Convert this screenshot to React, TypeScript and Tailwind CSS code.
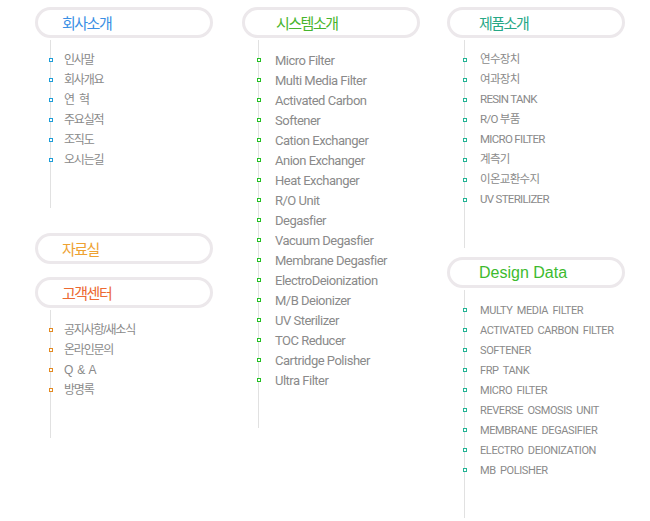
import React from 'react';

type Section = {
  title: string;
  titleClass: string;
  titlePad: string;
  bulletClass: string;
  lineOffset: string;
  textGap: string;
  itemClass: string;
  items: string[];
};

const KR = "font-['Noto_Sans_CJK_KR',sans-serif]";

function Pill({ title, titleClass, titlePad }: { title: string; titleClass: string; titlePad: string }) {
  return (
    <div
      className={`w-[178px] h-[31px] rounded-full border-[3px] border-[#ece8eb] bg-white flex items-center ${titlePad}`}
    >
      <span className={`leading-none ${titleClass}`}>{title}</span>
    </div>
  );
}

function MenuList({ section }: { section: Section }) {
  return (
    <ul className={`mt-[2px] border-l border-[#e1e1e1] pt-[10px] pb-[38px] ${section.lineOffset}`}>
      {section.items.map((item) => (
        <li key={item} className="h-5 flex items-center">
          <span className={`w-[4px] h-[4px] border bg-white -ml-[2px] shrink-0 ${section.bulletClass}`} />
          <span className={`${section.textGap} text-[#8a8a8a] leading-none whitespace-pre ${section.itemClass}`}>
            {item}
          </span>
        </li>
      ))}
    </ul>
  );
}

const company: Section = {
  title: '회사소개',
  titleClass: `${KR} text-[15px] tracking-[-1.5px] text-[#3a8fe4]`,
  titlePad: 'pl-[24px]',
  bulletClass: 'border-[#1f9ed8]',
  lineOffset: 'ml-[15px]',
  textGap: 'ml-[11px]',
  itemClass: `font-['Liberation_Sans','Noto_Sans_CJK_KR',sans-serif] text-[12px] tracking-[-1.2px] [word-spacing:3px]`,
  items: ['인사말', '회사개요', '연 혁', '주요실적', '조직도', '오시는길'],
};

const customer: Section = {
  ...company,
  title: '고객센터',
  titleClass: `${KR} text-[15px] tracking-[-1.5px] text-[#ec6a32]`,
  bulletClass: 'border-[#e38a22]',
  items: ['공지사항/새소식', '온라인문의', 'Q & A', '방명록'],
};

const system: Section = {
  title: '시스템소개',
  titleClass: `${KR} text-[15px] tracking-[-1.5px] text-[#47b52e]`,
  titlePad: 'pl-[31px]',
  bulletClass: 'border-[#25c025]',
  lineOffset: 'ml-[16px]',
  textGap: 'ml-[14px]',
  itemClass: "font-['Roboto',sans-serif] text-[13px] tracking-[-0.5px]",
  items: [
    'Micro Filter',
    'Multi Media Filter',
    'Activated Carbon',
    'Softener',
    'Cation Exchanger',
    'Anion Exchanger',
    'Heat Exchanger',
    'R/O Unit',
    'Degasfier',
    'Vacuum Degasfier',
    'Membrane Degasfier',
    'ElectroDeionization',
    'M/B Deionizer',
    'UV Sterilizer',
    'TOC Reducer',
    'Cartridge Polisher',
    'Ultra Filter',
  ],
};

const product: Section = {
  title: '제품소개',
  titleClass: `${KR} text-[15px] tracking-[-1.5px] text-[#27a886]`,
  titlePad: 'pl-[29px]',
  bulletClass: 'border-[#22b394]',
  lineOffset: 'ml-[17px]',
  textGap: 'ml-[13px]',
  itemClass: `font-['Roboto','Noto_Sans_CJK_KR',sans-serif] text-[11.5px] tracking-[-0.7px]`,
  items: ['연수장치', '여과장치', 'RESIN TANK', 'R/O 부품', 'MICRO FILTER', '계측기', '이온교환수지', 'UV STERILIZER'],
};

const design: Section = {
  ...product,
  title: 'Design Data',
  titleClass: "font-['Liberation_Sans',sans-serif] text-[16px] text-[#3dbb2e]",
  itemClass: "font-['Roboto',sans-serif] text-[11px] tracking-[-0.4px] [word-spacing:2px]",
  items: [
    'MULTY MEDIA FILTER',
    'ACTIVATED CARBON FILTER',
    'SOFTENER',
    'FRP TANK',
    'MICRO FILTER',
    'REVERSE OSMOSIS UNIT',
    'MEMBRANE DEGASIFIER',
    'ELECTRO DEIONIZATION',
    'MB POLISHER',
  ],
};

export default function App() {
  return (
    <div className="w-[650px] h-[521px] bg-white flex pl-[35px] pt-[7px] overflow-hidden">
      <div className="w-[207px] flex flex-col">
        <Pill title={company.title} titleClass={company.titleClass} titlePad={company.titlePad} />
        <MenuList section={company} />
        <div className="mt-[25px]">
          <Pill
            title="자료실"
            titleClass={`${KR} text-[15px] tracking-[-1.5px] text-[#eea232]`}
            titlePad="pl-[24px]"
          />
        </div>
        <div className="mt-[13px]">
          <Pill title={customer.title} titleClass={customer.titleClass} titlePad={customer.titlePad} />
        </div>
        <MenuList section={customer} />
      </div>

      <div className="w-[205px] flex flex-col">
        <Pill title={system.title} titleClass={system.titleClass} titlePad={system.titlePad} />
        <MenuList section={system} />
      </div>

      <div className="w-[178px] flex flex-col">
        <Pill title={product.title} titleClass={product.titleClass} titlePad={product.titlePad} />
        <MenuList section={product} />
        <div className="mt-[9px]">
          <Pill title={design.title} titleClass={design.titleClass} titlePad={design.titlePad} />
        </div>
        <MenuList section={design} />
      </div>
    </div>
  );
}
